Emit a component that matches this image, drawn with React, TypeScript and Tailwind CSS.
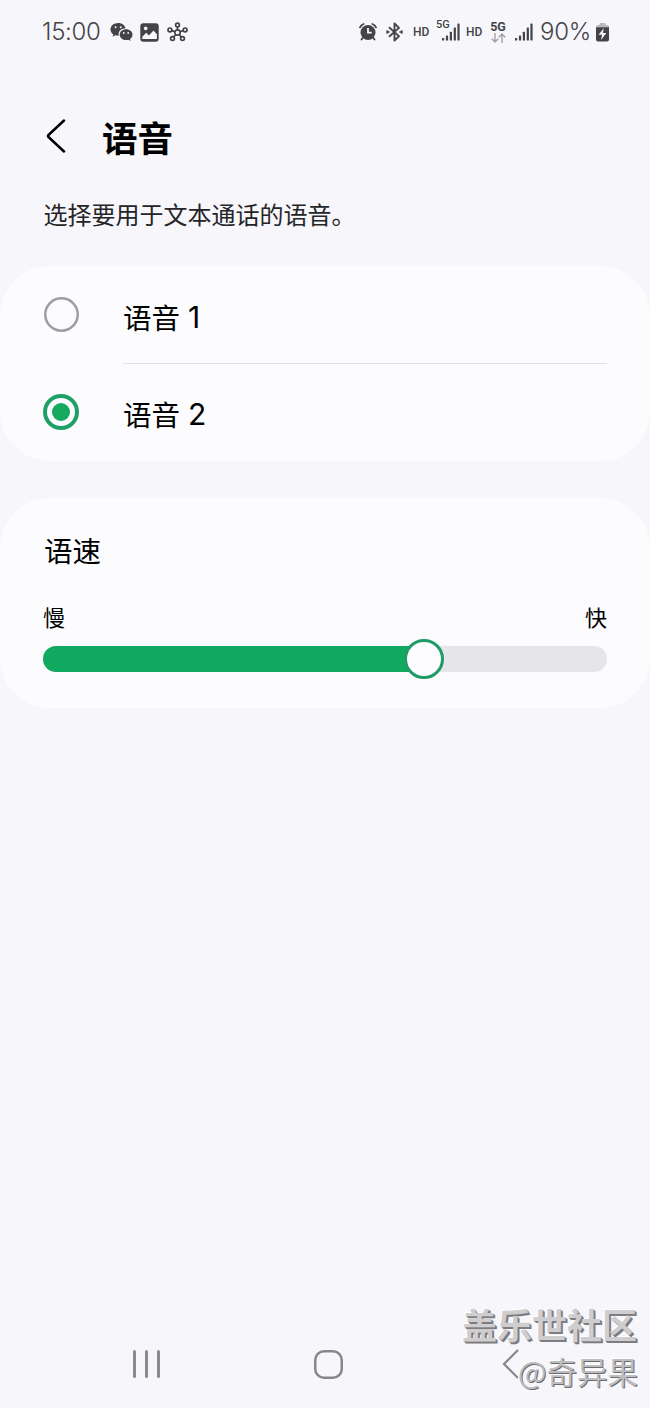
import { useState } from 'react';

const voices = [
  { id: 1, name: '语音' },
  { id: 2, name: '语音' },
];

function WeChatIcon() {
  return (
    <svg className="w-[23px] h-5 shrink-0" viewBox="0 0 23 20" fill="#444447">
      <path d="M8.4 1C3.9 1 .5 3.8.5 7.4c0 2 1.1 3.7 2.8 4.9l-.7 2.4 2.8-1.4c1 .3 2 .4 3 .4h.4C7.7 9.5 10.9 6.4 15.6 6.2 14.7 3.2 11.9 1 8.4 1Z" />
      <path d="M22.5 12.7c0-3-2.9-5.400-6.400-5.400s-6.400 2.400-6.400 5.400 2.900 5.400 6.400 5.400c.8 0 1.500-.1 2.200-.3l2.300 1.300-.6-2c1.500-1 2.500-2.600 2.500-4.400Z" />
      <g fill="#f6f6fb">
        <circle cx="5.6" cy="5.3" r="1" />
        <circle cx="10.7" cy="5.3" r="1" />
        <circle cx="13.8" cy="11" r=".9" />
        <circle cx="18.2" cy="11" r=".9" />
      </g>
    </svg>
  );
}

function PictureIcon() {
  return (
    <svg className="w-[19px] h-[19px] shrink-0" viewBox="0 0 19 19">
      <rect x=".3" y=".3" width="18.4" height="18.4" rx="3" fill="#444447" />
      <circle cx="5.7" cy="5.4" r="1.8" fill="#f6f6fb" />
      <path d="M2.3 13.7 6.3 9.8l2.6 2.7 4.6-5 3.400 3.700v4.900H2.300Z" fill="#f6f6fb" />
    </svg>
  );
}

function HubIcon() {
  return (
    <svg className="w-[21px] h-5 shrink-0" viewBox="0 0 21 20" fill="none" stroke="#444447" strokeWidth="1.7">
      <path d="M10.5 5v3M4.5 8.400l3.300 1.300M16.500 8.400l-3.300 1.300M6.700 14.900l2.200-2.400M14.300 14.900l-2.200-2.400" />
      <circle cx="10.5" cy="10.5" r="2.7" />
      <circle cx="10.5" cy="3" r="1.9" />
      <circle cx="2.9" cy="7.9" r="1.9" />
      <circle cx="18.1" cy="7.9" r="1.9" />
      <circle cx="5.5" cy="16.6" r="1.9" />
      <circle cx="15.5" cy="16.6" r="1.9" />
    </svg>
  );
}

function AlarmIcon() {
  return (
    <svg className="w-[18px] h-[18px] shrink-0" viewBox="0 0 18 18">
      <circle cx="9" cy="9.5" r="7.5" fill="#444447" />
      <path d="M1 4.400C1.600 3 3 1.600 4.600 1M17 4.400C16.400 3 15 1.600 13.400 1M4 14.500l-1.500 2M14 14.500l1.500 2" stroke="#444447" strokeWidth="1.8" strokeLinecap="round" fill="none" />
      <path d="M9 5v4.700h3.700" stroke="#f6f6fb" strokeWidth="1.8" fill="none" />
    </svg>
  );
}

function BluetoothIcon() {
  return (
    <svg className="w-[17px] h-5 shrink-0" viewBox="0 0 17 20" fill="none" stroke="#444447" strokeWidth="1.9" strokeLinejoin="round">
      <path d="M3 5.200 13 14.100 8.500 18.500V1.500L13 5.900 3 14.800" />
      <path d="M.8 8.500 3.600 10 .8 11.500ZM16.200 8.500 13.400 10l2.800 1.500Z" fill="#444447" strokeWidth=".8" />
    </svg>
  );
}

function SignalIcon() {
  return (
    <svg className="w-[18px] h-[18px] shrink-0" viewBox="0 0 18 18" fill="#444447">
      <rect x="0" y="15" width="2.2" height="2.5" rx=".6" />
      <rect x="3.9" y="12.5" width="2.2" height="5" rx=".6" />
      <rect x="7.8" y="8.7" width="2.2" height="8.8" rx=".6" />
      <rect x="11.7" y="4.5" width="2.2" height="13" rx=".6" />
      <rect x="15.4" y=".5" width="2.2" height="17" rx=".6" />
    </svg>
  );
}

function BatteryIcon() {
  return (
    <svg className="w-[13px] h-[19px] shrink-0" viewBox="0 0 13 19">
      <path d="M0 4.800V4a2 2 0 0 1 2-2h1.500V1q0-1 1-1h4q1 0 1 1v1H11a2 2 0 0 1 2 2v.8Z" fill="#b9b9bd" />
      <path d="M0 4.300h13V16.500a2 2 0 0 1-2 2H2a2 2 0 0 1-2-2Z" fill="#444447" />
      <path d="M7.700 5.200 2.600 11.700h3.500L5 17l5.400-7H7Z" fill="#f6f6fb" />
    </svg>
  );
}

function StatusBar() {
  return (
    <header className="flex h-16 items-center px-[41px] font-[Roboto,sans-serif] text-[#444447]">
      <span className="w-[61px] pl-px font-[Inter,sans-serif] text-[24px] font-light leading-8 tracking-[-0.3px]">15:00</span>
      <div className="ml-2 flex items-center gap-[7px]">
        <WeChatIcon />
        <PictureIcon />
        <span className="ml-px flex"><HubIcon /></span>
      </div>
      <div className="ml-auto flex items-center">
        <AlarmIcon />
        <span className="ml-[9px] flex"><BluetoothIcon /></span>
        <span className="ml-[10px] w-[17px] text-[12px] font-medium leading-4">HD</span>
        <div className="relative ml-[12px]">
          <SignalIcon />
          <span className="absolute -left-[6px] -top-[4px] text-[11px] font-medium leading-3">5G</span>
        </div>
        <span className="ml-[6px] w-[17px] text-[12px] font-medium leading-4">HD</span>
        <div className="ml-[7px] flex w-4 flex-col items-center">
          <span className="text-[12.5px] font-bold leading-3">5G</span>
          <svg className="h-[10px] w-[15px]" viewBox="0 0 15 10" fill="none" stroke="#a3a3a7" strokeWidth="1.4">
            <path d="M4 0v9M.8 5.700 4 9l3.200-3.300M11 10V1M7.800 4.300 11 1l3.200 3.300" />
          </svg>
        </div>
        <span className="ml-[9px] flex"><SignalIcon /></span>
        <span className="ml-[7px] w-[54px] font-[Inter,sans-serif] text-[24px] font-light leading-8 tracking-[-0.3px]">90%</span>
        <span className="ml-[2px] flex"><BatteryIcon /></span>
      </div>
    </header>
  );
}

function Radio({ checked }: { checked: boolean }) {
  if (!checked) {
    return <span className="mx-[0.5px] size-[35px] shrink-0 rounded-full inset-ring-[2.5px] inset-ring-[#9d9d9f]" />;
  }
  return (
    <span className="flex size-9 shrink-0 items-center justify-center rounded-full border-4 border-[#1fa066]">
      <span className="size-[18px] rounded-full bg-[#14a95f]" />
    </span>
  );
}

function SpeedSlider({ value }: { value: number }) {
  return (
    <div className="relative mt-[14px] h-[26px] rounded-full bg-[#e5e5ea]">
      <div className="h-full rounded-l-full bg-[#11a960]" style={{ width: `${value}%` }} />
      <span
        className="absolute top-1/2 size-10 -translate-x-1/2 -translate-y-1/2 rounded-full border-[3px] border-[#1f9c66] bg-[#fdfdff]"
        style={{ left: `${value}%` }}
      />
    </div>
  );
}

function NavBar() {
  return (
    <nav className="relative mt-auto flex h-[88px] items-center pl-[133px]">
      <div className="flex w-[27px] justify-between">
        <span className="h-7 w-[3px] rounded-full bg-[#8b8b8e]" />
        <span className="h-7 w-[3px] rounded-full bg-[#8b8b8e]" />
        <span className="h-7 w-[3px] rounded-full bg-[#8b8b8e]" />
      </div>
      <span className="ml-[154px] size-[29px] rounded-[10px] inset-ring-[2.5px] inset-ring-[#87878a]" />
      <svg className="ml-[159px] h-[30px] w-[18px]" viewBox="0 0 18 30" fill="none" stroke="#87878a" strokeWidth="2.2">
        <path d="M16 1 2 15l14 14" />
      </svg>
      {/* Watermark */}
      <div className="absolute right-[13px] top-[-21px] flex flex-col items-end whitespace-nowrap">
        <span className="text-[35px] font-bold leading-[50px] text-[#cfcdce] [text-shadow:1px_1px_0_#7d7d81,2px_2px_0_#7d7d81,-1px_-1px_0_#ffffff]">
          盖乐世社区
        </span>
        <span className="-mr-px text-[30.5px] leading-[44px] text-[#bdbcbf] [text-shadow:1px_1px_0_#6c6c70,-1px_-1px_0_#ffffff]">
          @奇异果
        </span>
      </div>
    </nav>
  );
}

export default function App() {
  const [selected, setSelected] = useState(2);

  return (
    <div className="flex h-[1408px] w-[650px] flex-col overflow-hidden bg-[#f6f6fb] font-['Noto_Sans_CJK_SC',sans-serif] text-black">
      <StatusBar />

      {/* Title */}
      <div className="mt-[45px] flex h-[56px] items-center pl-[46px]">
        <svg className="-mt-[3px] h-[34px] w-5" viewBox="0 0 20 34" fill="none" stroke="#000" strokeWidth="2.5" strokeLinecap="round" strokeLinejoin="round">
          <path d="M18 1.500 2.500 16Q1.500 17 2.500 18L18 32.500" />
        </svg>
        <h1 className="ml-[36px] text-[35.5px] font-bold leading-[56px]">语音</h1>
      </div>
      <p className="mt-[29px] pl-[43.5px] text-[24px] leading-10 text-[#252528]">选择要用于文本通话的语音。</p>

      {/* Voice choice */}
      <section className="mt-[32px] h-[195px] shrink-0 rounded-[50px] bg-[#fcfcff] px-[43px]">
        {voices.map(({ id, name }) => (
          <button
            key={id}
            onClick={() => setSelected(id)}
            className="flex h-[97px] w-full items-center text-left"
          >
            <Radio checked={selected === id} />
            <span
              className={`ml-[44px] flex h-full flex-1 items-center gap-[8px] pt-[5px] text-[28.5px] ${
                id < voices.length ? 'shadow-[0_1px_0_#e1e1e6]' : ''
              }`}
            >
              {name}
              <span className="font-[Inter,sans-serif] text-[30px]">{id}</span>
            </span>
          </button>
        ))}
      </section>

      {/* Speech rate */}
      <section className="mt-[37px] h-[210px] shrink-0 rounded-[50px] bg-[#fcfcff] px-[43px] pt-[30px]">
        <h2 className="pl-px text-[28.5px] leading-[44px]">语速</h2>
        <div className="mt-[28px] flex justify-between text-[22px] leading-8">
          <span>慢</span>
          <span>快</span>
        </div>
        <SpeedSlider value={67.5} />
      </section>

      <NavBar />
    </div>
  );
}
